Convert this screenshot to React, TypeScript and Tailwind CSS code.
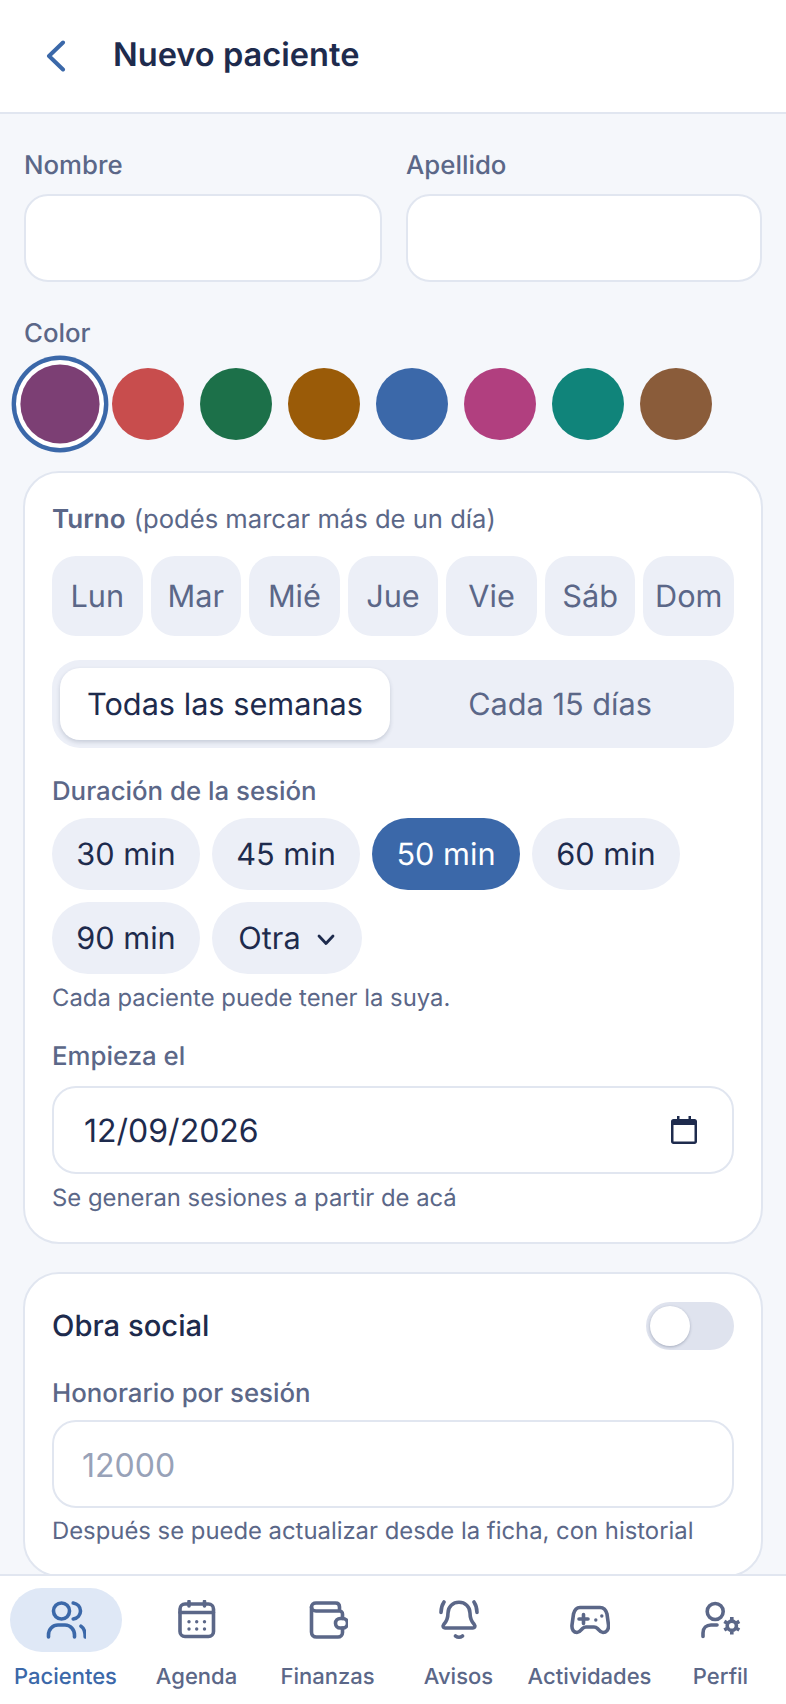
import React from "react";

const ink = "text-[#1e2b4d]";
const Label = ({ children, className = "" }: { children: React.ReactNode; className?: string }) => (
  <div className={`text-[25.8px] leading-[32px] font-[450] text-[#5b6788] ${className}`}>{children}</div>
);
const Help = ({ children, className = "" }: { children: React.ReactNode; className?: string }) => (
  <div className={`text-[23.85px] leading-[32px] text-[#5b6788] ${className}`}>{children}</div>
);

function UsersIcon() {
  return (
    <svg width="40" height="40" viewBox="0 0 40 40" fill="none" stroke="#3b68a9" strokeWidth="3.6" strokeLinecap="round" strokeLinejoin="round">
      <circle cx="15.5" cy="11" r="8" />
      <path d="M27.2 3C31.5 3.8 34.5 7 34.5 11C34.5 15 31.5 18.2 27.2 19" />
      <path d="M2.5 37V35C2.5 29 7 25 12 25H19C24.5 25 28.5 29.5 28.5 35V37" />
      <path d="M35 26.2C38 28 39.2 32 39.2 37" />
    </svg>
  );
}
function CalIcon() {
  return (
    <svg width="40" height="40" viewBox="0 0 40 40" fill="none" stroke="#5b6788" strokeWidth="3.6" strokeLinecap="round" strokeLinejoin="round">
      <rect x="3" y="4" width="33.5" height="32.5" rx="5" />
      <path d="M12 1.5V6M27.5 1.5V6M3 12.5H36.5" />
      <g fill="#5b6788" stroke="none">
        {[12, 19.7, 27.5].map((x) => [21.7, 29].map((y) => <circle key={`${x}-${y}`} cx={x} cy={y} r="1.7" />))}
      </g>
    </svg>
  );
}
function WalletIcon() {
  return (
    <svg width="40" height="40" viewBox="0 0 40 40" fill="none" stroke="#5b6788" strokeWidth="3.6" strokeLinecap="round" strokeLinejoin="round">
      <path d="M3.5 7V32C3.5 35 5.5 37 8.5 37H30C32.5 37 34.5 35 34.5 32.5V28" />
      <path d="M34.5 18.5V14C34.5 12 33 11 31.5 11H8C5.5 11 3.5 9.5 3.5 7C3.5 4.5 5.5 3 8 3H27.5C30 3 31.5 4.5 31.5 7V11" />
      <rect x="27.5" y="18.5" width="12" height="9.5" rx="4.75" />
    </svg>
  );
}
function BellIcon() {
  return (
    <svg width="40" height="40" viewBox="0 0 40 40" fill="none" stroke="#5b6788" strokeWidth="3.6" strokeLinecap="round" strokeLinejoin="round">
      <path d="M6 28H34C36 28 36.5 26 35.3 24.5C32 21 31 18 31 13C31 6.5 26 2.3 20 2.3C14 2.3 9 6.5 9 13C9 18 8 21 4.7 24.5C3.5 26 4 28 6 28Z" />
      <path d="M16.5 36Q20 38.5 23.5 36" />
      <path d="M2 12.5C2 8.5 3 5 5 2M38 12.5C38 8.5 37 5 35 2" />
    </svg>
  );
}
function PadIcon() {
  return (
    <svg width="40" height="40" viewBox="0 0 40 40" fill="none" stroke="#5b6788" strokeWidth="3.6" strokeLinecap="round" strokeLinejoin="round">
      <path d="M10 7.5H30C34 7.5 36 10 37 14L38.5 25C39 30 36 32.5 33 32.5C30 32.5 29 30 27.5 28.5C26.5 27.5 25.5 27 24 27H16C14.5 27 13.5 27.5 12.5 28.5C11 30 10 32.5 7 32.5C4 32.5 1.5 30 2 25L3.5 14C4.5 10 6.5 7.5 10 7.5Z" />
      <path d="M9 19H18M13.5 14.5V23.5" />
      <g fill="#5b6788" stroke="none">
        <circle cx="25.8" cy="20" r="1.7" />
        <circle cx="31.8" cy="16" r="1.7" />
      </g>
    </svg>
  );
}
function UserCogIcon() {
  return (
    <svg width="40" height="40" viewBox="0 0 40 40" fill="none" stroke="#5b6788" strokeWidth="3.6" strokeLinecap="round" strokeLinejoin="round">
      <circle cx="14.2" cy="11.5" r="8" />
      <path d="M2 36.5V33C2 28 5.5 25 10 25H16" />
      <circle cx="30.8" cy="25.7" r="4.6" />
      <g strokeLinecap="butt" strokeWidth="3.6">
        <path d="M30.8 17V20M30.8 31.4V34.4M23.3 21.4L25.9 22.9M35.7 28.5L38.3 30M23.3 30L25.9 28.5M35.7 22.9L38.3 21.4" />
      </g>
    </svg>
  );
}

const nav = [
  { label: "Pacientes", icon: <UsersIcon />, active: true },
  { label: "Agenda", icon: <CalIcon /> },
  { label: "Finanzas", icon: <WalletIcon /> },
  { label: "Avisos", icon: <BellIcon /> },
  { label: "Actividades", icon: <PadIcon /> },
  { label: "Perfil", icon: <UserCogIcon /> },
];

const swatches = ["bg-[#c84d4d]", "bg-[#1c7049]", "bg-[#9a5b08]", "bg-[#3b68a9]", "bg-[#b13f7f]", "bg-[#10847a]", "bg-[#8a5c3a]"];
const days = ["Lun", "Mar", "Mié", "Jue", "Vie", "Sáb", "Dom"];
const durations = ["30 min", "45 min", "50 min", "60 min", "90 min"];

export default function App() {
  return (
    <div className="w-[786px] h-[1704px] flex flex-col overflow-hidden bg-[#f5f7fb] font-['Inter',sans-serif] antialiased [text-rendering:geometricPrecision]">
      <header className="h-[114px] shrink-0 bg-white border-b-2 border-[#e1e6f0] flex items-center">
        <div className="w-[113px] pl-[46px] flex items-center">
          <svg width="20" height="32" viewBox="0 0 20 32" fill="none" stroke="#3b68a9" strokeWidth="4" strokeLinecap="round" strokeLinejoin="round">
            <path d="M17 2.5L3 16L17 29.5" />
          </svg>
        </div>
        <h1 className={`text-[32.6px] leading-[40px] font-semibold -mt-[4px] ${ink}`}>Nuevo paciente</h1>
      </header>

      <main className="flex-1 min-h-0 overflow-hidden px-6 pt-[36px]">
        <div className="flex gap-6">
          <div className="w-[358px]">
            <Label>Nombre</Label>
            <input className="mt-[12px] block w-full h-[88px] rounded-[24px] border-2 border-[#e1e6f0] bg-white" />
          </div>
          <div className="flex-1">
            <Label>Apellido</Label>
            <input className="mt-[12px] block w-full h-[88px] rounded-[24px] border-2 border-[#e1e6f0] bg-white" />
          </div>
        </div>

        <Label className="mt-[36px]">Color</Label>
        <div className="mt-[18px] flex gap-4">
          <div className="w-[72px] h-[72px] rounded-full bg-[#7c3f74] scale-110 shadow-[0_0_0_4px_#ffffff,0_0_0_8px_#3b68a9]" />
          {swatches.map((c) => (
            <div key={c} className={`w-[72px] h-[72px] rounded-full ${c}`} />
          ))}
        </div>

        <section className="mt-[31px] -mx-px rounded-[36px] border-2 border-[#e1e6f0] bg-white px-[27px] pt-[31px] pb-[28px]">
          <div className="text-[25.6px] leading-[32px] text-[#5b6788]">
            <span className="font-semibold text-[26px]">Turno</span> <span className="ml-px">(podés marcar más de un día)</span>
          </div>
          <div className="mt-[20px] grid grid-cols-7 gap-2">
            {days.map((d) => (
              <div key={d} className="h-[80px] pt-[3px] rounded-[24px] bg-[#eceff7] flex items-center justify-center text-[30.7px] text-[#5b6788]">
                {d}
              </div>
            ))}
          </div>

          <div className="mt-[24px] h-[88px] rounded-[28px] bg-[#eceff7] p-2 flex gap-1">
            <div className={`w-[330px] pt-[3px] rounded-[20px] bg-white shadow-[0_2px_4px_rgba(30,43,77,0.18)] flex items-center justify-center text-[30.7px] ${ink}`}>
              Todas las semanas
            </div>
            <div className="flex-1 pt-[3px] flex items-center justify-center text-[30.7px] text-[#5b6788]">Cada 15 días</div>
          </div>

          <Label className="mt-[28px]">Duración de la sesión</Label>
          <div className="mt-[10px] flex flex-wrap gap-3">
            {durations.map((d) => (
              <div
                key={d}
                className={`w-[148px] h-[72px] pt-[3px] rounded-full flex items-center justify-center text-[30.7px] ${
                  d === "50 min" ? "bg-[#3b68a9] text-white" : `bg-[#eceff7] ${ink}`
                }`}
              >
                {d}
              </div>
            ))}
            <div className={`w-[150px] h-[72px] pt-[3px] rounded-full bg-[#eceff7] flex items-center justify-center gap-[15px] text-[30.7px] ${ink}`}>
              Otra
              <svg width="20" height="12" viewBox="0 0 20 12" fill="none" stroke="#1e2b4d" strokeWidth="2.8" strokeLinecap="round" strokeLinejoin="round">
                <path d="M3 2L10 9.5L17 2" />
              </svg>
            </div>
          </div>
          <Help className="mt-2">Cada paciente puede tener la suya.</Help>

          <Label className="mt-[27px]">Empieza el</Label>
          <div className="mt-[13px] h-[88px] rounded-[24px] border-2 border-[#e1e6f0] bg-white flex items-center justify-between pl-[30px] pr-[35px]">
            <span className={`text-[32px] pt-[2px] ${ink}`}>12/09/2026</span>
            <svg width="26" height="28" viewBox="0 0 26 28" fill="none">
              <path d="M6 0H8.5V3H17.5V0H20V3H23.5C25 3 26 4 26 5.5V25.5C26 27 25 28 23.5 28H2.5C1 28 0 27 0 25.5V5.5C0 4 1 3 2.5 3H6V0Z" fill="#1e2b4d" />
              <rect x="2.5" y="9" width="21" height="16.5" fill="#ffffff" />
            </svg>
          </div>
          <Help className="mt-2">Se generan sesiones a partir de acá</Help>
        </section>

        <section className="mt-7 -mx-px rounded-[36px] border-2 border-[#e1e6f0] bg-white px-[27px] pt-[28px] pb-[28px]">
          <div className="flex items-center justify-between h-[48px]">
            <span className={`text-[29.2px] pt-[2px] font-medium ${ink}`}>Obra social</span>
            <div className="w-[88px] h-[48px] rounded-full bg-[#dfe3ee] p-1">
              <div className="w-10 h-10 rounded-full bg-white shadow-[0_1px_3px_rgba(30,43,77,0.3)]" />
            </div>
          </div>
          <Label className="mt-[28px]">Honorario por sesión</Label>
          <input
            placeholder="12000"
            className="mt-[10px] block w-full h-[88px] rounded-[24px] border-2 border-[#e1e6f0] bg-white pl-[28px] pt-[2px] text-[32px] placeholder:text-[#98a2b8]"
          />
          <Help className="mt-[7px]">Después se puede actualizar desde la ficha, con historial</Help>
        </section>
      </main>

      <nav className="h-[130px] shrink-0 bg-white border-t-2 border-[#e1e6f0] grid grid-cols-6 relative">
        {nav.map((n) => (
          <div key={n.label} className="flex flex-col items-center pt-3">
            <div className={`w-[112px] h-[64px] rounded-full flex items-center justify-center ${n.active ? "bg-[#dfe8f6]" : ""}`}>
              {n.icon}
            </div>
            <div className={`mt-[11px] text-[22px] leading-[28px] font-medium whitespace-nowrap ${n.active ? "text-[#3b68a9]" : "text-[#5b6788]"}`}>
              {n.label}
            </div>
          </div>
        ))}
      </nav>
    </div>
  );
}
